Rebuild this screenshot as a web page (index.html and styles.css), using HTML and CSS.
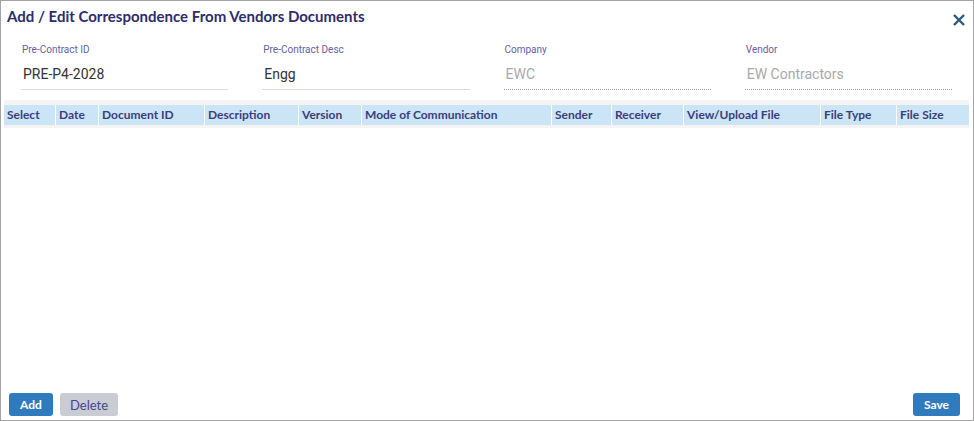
FILE: index.html
```html
<!DOCTYPE html>
<html>
<head>
<meta charset="utf-8">
<link rel="stylesheet" href="styles.css">
</head>
<body>
<div class="dialog">
  <div class="title-row">
    <h1 class="title">Add / Edit Correspondence From Vendors Documents</h1>
    <svg class="close" width="12" height="12" viewBox="0 0 12 12"><path d="M1 1 L11 11 M11 1 L1 11" stroke="#2f5876" stroke-width="2.4" stroke-linecap="butt"/></svg>
  </div>
  <div class="fields">
    <div class="field">
      <div class="label">Pre-Contract ID</div>
      <div class="value">PRE-P4-2028</div>
    </div>
    <div class="field">
      <div class="label">Pre-Contract Desc</div>
      <div class="value">Engg</div>
    </div>
    <div class="field disabled">
      <div class="label">Company</div>
      <div class="value">EWC</div>
    </div>
    <div class="field disabled">
      <div class="label">Vendor</div>
      <div class="value">EW Contractors</div>
    </div>
  </div>
  <div class="grid">
    <div class="grid-head">
      <div class="th c1">Select</div>
      <div class="th c2">Date</div>
      <div class="th c3">Document ID</div>
      <div class="th c4">Description</div>
      <div class="th c5">Version</div>
      <div class="th c6">Mode of Communication</div>
      <div class="th c7">Sender</div>
      <div class="th c8">Receiver</div>
      <div class="th c9">View/Upload File</div>
      <div class="th c10">File Type</div>
      <div class="th c11">File Size</div>
    </div>
  </div>
  <div class="footer">
    <div class="left-btns">
      <button class="btn primary">Add</button>
      <button class="btn secondary">Delete</button>
    </div>
    <button class="btn primary save">Save</button>
  </div>
</div>
</body>
</html>
```
FILE: styles.css
```css
* { box-sizing: border-box; }
html, body { margin: 0; padding: 0; background: #fff; }
.dialog {
  width: 974px;
  height: 421px;
  border: 1px solid #a3a3a3;
  display: flex;
  flex-direction: column;
  padding: 0 4px 0 3px;
}
.title-row {
  display: flex;
  justify-content: space-between;
  align-items: flex-start;
  padding: 6px 4px 0 3px;
  height: 43px;
}
.title {
  margin: 0;
  font-family: Lato, "Liberation Sans", sans-serif;
  font-weight: 700;
  font-size: 15px;
  line-height: 19px;
  color: #2e2c6b;
}
.close { margin-top: 7px; }
.fields {
  display: grid;
  grid-template-columns: repeat(4, 1fr);
  height: 56px;
}
.field { padding: 0 17px; }
.label {
  font-family: Roboto, "Liberation Sans", sans-serif;
  font-size: 10px;
  line-height: 12px;
  color: #6361a3;
  padding-left: 1px;
}
.value {
  font-family: Roboto, "Liberation Sans", sans-serif;
  font-size: 14px;
  line-height: 18px;
  color: #333;
  padding: 9px 0 6px 2px;
  border-bottom: 1px solid #dcdcdc;
}
.disabled .value {
  color: #a9a9a9;
  border-bottom: 1px dotted #9a9a9a;
}
.grid {
  flex: 1;
  border-top: 5px solid #f4f4f4;
}
.grid-head {
  display: flex;
  background: #cbe5f7;
  height: 20px;
  border-bottom: 3px solid #f4f4f4;
  box-sizing: content-box;
}
.th {
  font-family: Lato, "Liberation Sans", sans-serif;
  font-weight: 700;
  font-size: 12px;
  line-height: 20px;
  color: #3b3d7c;
  padding-left: 3px;
  border-right: 1px solid #fff;
  white-space: nowrap;
}
.c1 { width: 52px; }
.c2 { width: 43px; }
.c3 { width: 106px; }
.c4 { width: 94px; }
.c5 { width: 63px; }
.c6 { width: 190px; }
.c7 { width: 60px; }
.c8 { width: 72px; }
.c9 { width: 137px; }
.c10 { width: 76px; }
.c11 { width: 72px; border-right: none; }
.footer {
  display: flex;
  justify-content: space-between;
  align-items: center;
  padding: 0 9px 4px 5px;
  height: 27px;
}
.left-btns { display: flex; gap: 7px; }
.btn {
  font-family: Lato, "Liberation Sans", sans-serif;
  font-weight: 700;
  font-size: 12px;
  height: 23px;
  border: none;
  border-radius: 3px;
  padding: 0;
  cursor: pointer;
}
.primary { background: #2f7bbd; color: #fff; width: 44px; }
.secondary { background: #c9cdd3; color: #44468a; font-weight: 400; font-size: 13px; width: 58px; }
.save { width: 47px; }
```
